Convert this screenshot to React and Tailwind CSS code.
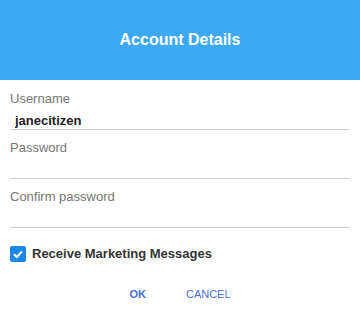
import { useState } from 'react'

// ── Form fields ───────────────────────────────────────────────────────────────
const FIELDS = [
  { id: 'username', label: 'Username', type: 'text', value: 'janecitizen' },
  { id: 'password', label: 'Password', type: 'password', value: '' },
  { id: 'confirm', label: 'Confirm password', type: 'password', value: '' },
]

function Field({ label, type, value }) {
  return (
    <div className="pt-[10px] first:pt-[11px]">
      <label className="block text-[13px] leading-4 text-[#757575]">{label}</label>
      <input
        type={type}
        defaultValue={value}
        className="block w-full h-[23px] pt-[4px] pl-[5px] text-[13px] leading-4 font-bold text-[#222] border-b border-[#cfcfcf] outline-none bg-transparent"
      />
    </div>
  )
}

export default function App() {
  const [marketing, setMarketing] = useState(true)

  return (
    <div className="w-[360px] h-[321px] bg-white" style={{ fontFamily: "'Liberation Sans', Arial, sans-serif" }}>
      {/* ── Header ─────────────────────────────────────────────────────── */}
      <header className="h-[80px] flex items-center justify-center bg-[#3da9f4]">
        <h1 className="text-[16px] font-bold text-white">Account Details</h1>
      </header>

      {/* ── Fields ─────────────────────────────────────────────────────── */}
      <div className="px-[10px]">
        {FIELDS.map((f) => (
          <Field key={f.id} {...f} />
        ))}

        {/* Marketing checkbox */}
        <label className="flex items-center gap-[6px] mt-[16px] cursor-pointer">
          <button
            type="button"
            onClick={() => setMarketing(!marketing)}
            className={`flex items-center justify-center w-[16px] h-[16px] rounded-[2px] ${marketing ? 'bg-[#1e88e5]' : 'border-2 border-[#888]'}`}
          >
            {marketing && (
              <svg width="12" height="12" viewBox="0 0 12 12" fill="none">
                <path d="M2 6.2 L4.8 9 L10 3.4" stroke="white" strokeWidth="2" />
              </svg>
            )}
          </button>
          <span className="text-[13px] font-bold text-[#333]">Receive Marketing Messages</span>
        </label>

        {/* Actions */}
        <div className="flex justify-center gap-[40px] mt-[22px]">
          <button className="text-[11px] font-bold text-[#4a6ee0]">OK</button>
          <button className="text-[11px] text-[#4a6ee0]">CANCEL</button>
        </div>
      </div>
    </div>
  )
}
